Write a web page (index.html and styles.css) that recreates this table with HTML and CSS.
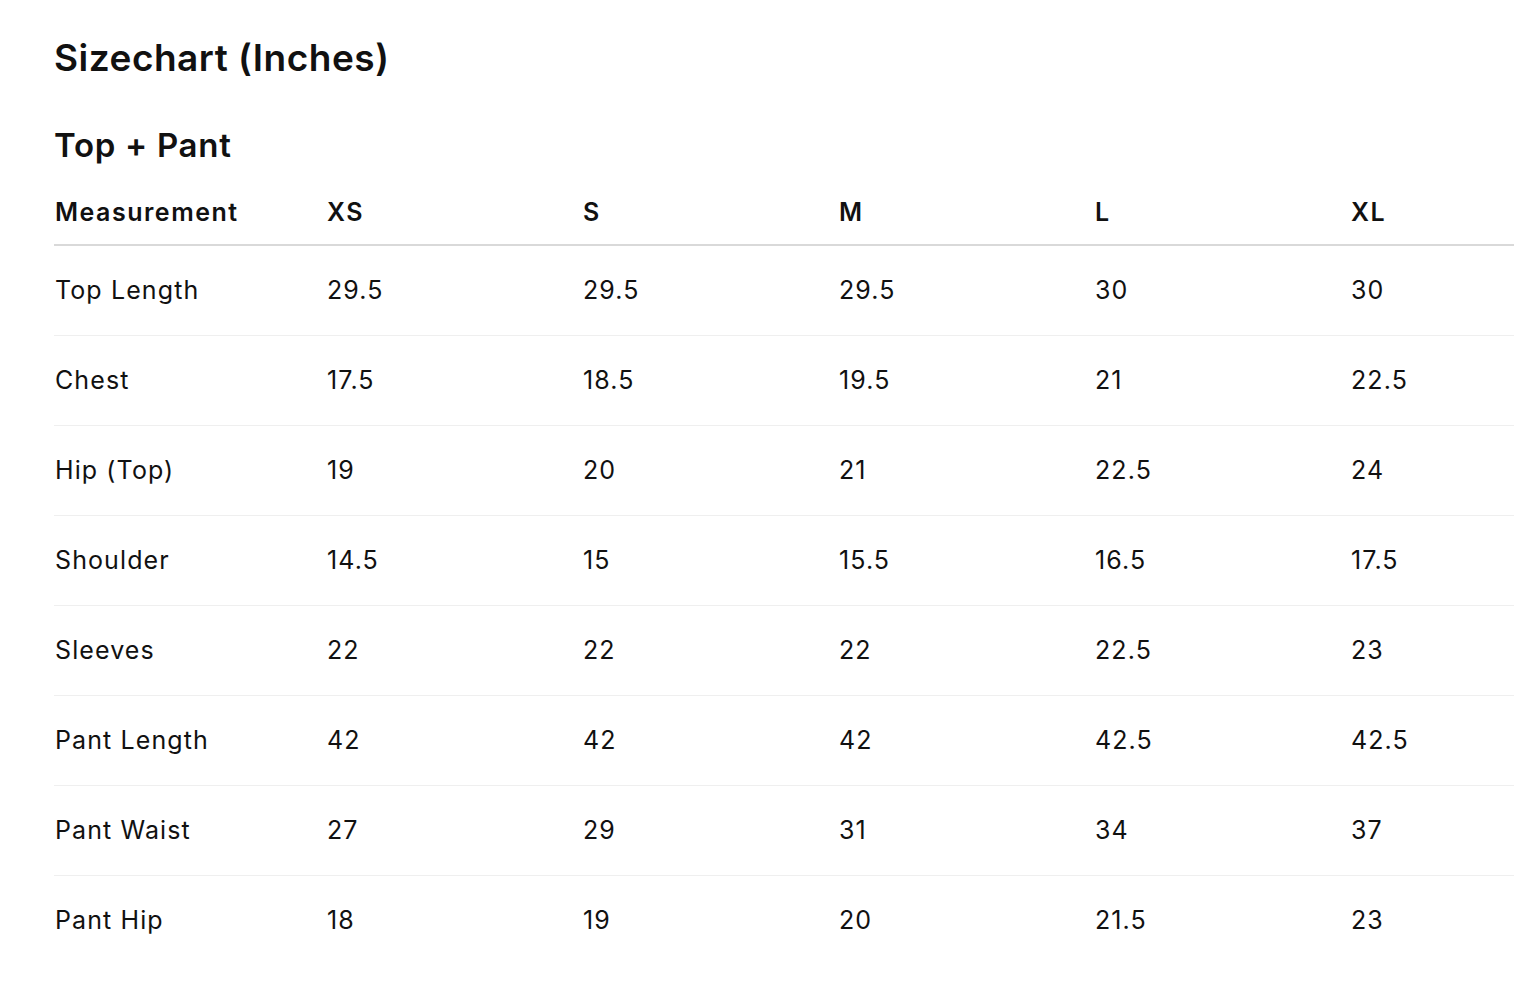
FILE: index.html
```html
<!DOCTYPE html>
<html lang="en">
<head>
<meta charset="utf-8">
<title>Sizechart</title>
<link rel="stylesheet" href="styles.css">
</head>
<body>
<main class="page">
  <h1 class="title">Sizechart (Inches)</h1>
  <h2 class="subtitle">Top + Pant</h2>
  <table class="chart">
    <colgroup>
      <col class="c-first"><col class="c-size"><col class="c-size"><col class="c-size"><col class="c-size"><col class="c-last">
    </colgroup>
    <thead>
      <tr><th>Measurement</th><th>XS</th><th>S</th><th>M</th><th>L</th><th>XL</th></tr>
    </thead>
    <tbody>
      <tr><td>Top Length</td><td>29.5</td><td>29.5</td><td>29.5</td><td>30</td><td>30</td></tr>
      <tr><td>Chest</td><td>17.5</td><td>18.5</td><td>19.5</td><td>21</td><td>22.5</td></tr>
      <tr><td>Hip (Top)</td><td>19</td><td>20</td><td>21</td><td>22.5</td><td>24</td></tr>
      <tr><td>Shoulder</td><td>14.5</td><td>15</td><td>15.5</td><td>16.5</td><td>17.5</td></tr>
      <tr><td>Sleeves</td><td>22</td><td>22</td><td>22</td><td>22.5</td><td>23</td></tr>
      <tr><td>Pant Length</td><td>42</td><td>42</td><td>42</td><td>42.5</td><td>42.5</td></tr>
      <tr><td>Pant Waist</td><td>27</td><td>29</td><td>31</td><td>34</td><td>37</td></tr>
      <tr><td>Pant Hip</td><td>18</td><td>19</td><td>20</td><td>21.5</td><td>23</td></tr>
    </tbody>
  </table>
</main>
</body>
</html>
```
FILE: styles.css
```css
html, body {
  margin: 0;
  padding: 0;
  background: #ffffff;
}
body {
  font-family: Inter, "Noto Sans", "Liberation Sans", sans-serif;
  color: #111111;
}
.page {
  padding: 36px 0 0 54px;
  overflow: hidden;
}
.title {
  margin: 0;
  font-size: 37px;
  line-height: 44px;
  font-weight: 600;
  letter-spacing: 0.5px;
}
.subtitle {
  margin: 45px 0 0;
  font-size: 33px;
  line-height: 40px;
  font-weight: 600;
  letter-spacing: 0.7px;
}
.chart {
  margin-top: 15px;
  border-collapse: collapse;
  table-layout: fixed;
  width: 1460px;
}
.c-first { width: 272px; }
.c-size { width: 256px; }
.c-last { width: 164px; }
.chart th {
  text-align: left;
  font-size: 25px;
  line-height: 32px;
  font-weight: 600;
  letter-spacing: 1.5px;
  padding: 16px 0 16px 1px;
  border-bottom: 2px solid #d9d9d9;
}
.chart td {
  text-align: left;
  font-size: 25px;
  line-height: 31px;
  font-weight: 400;
  letter-spacing: 1.1px;
  padding: 29px 0 29px 1px;
  border-bottom: 1px solid #efefef;
}
.chart tbody tr:last-child td {
  border-bottom: none;
}
```
